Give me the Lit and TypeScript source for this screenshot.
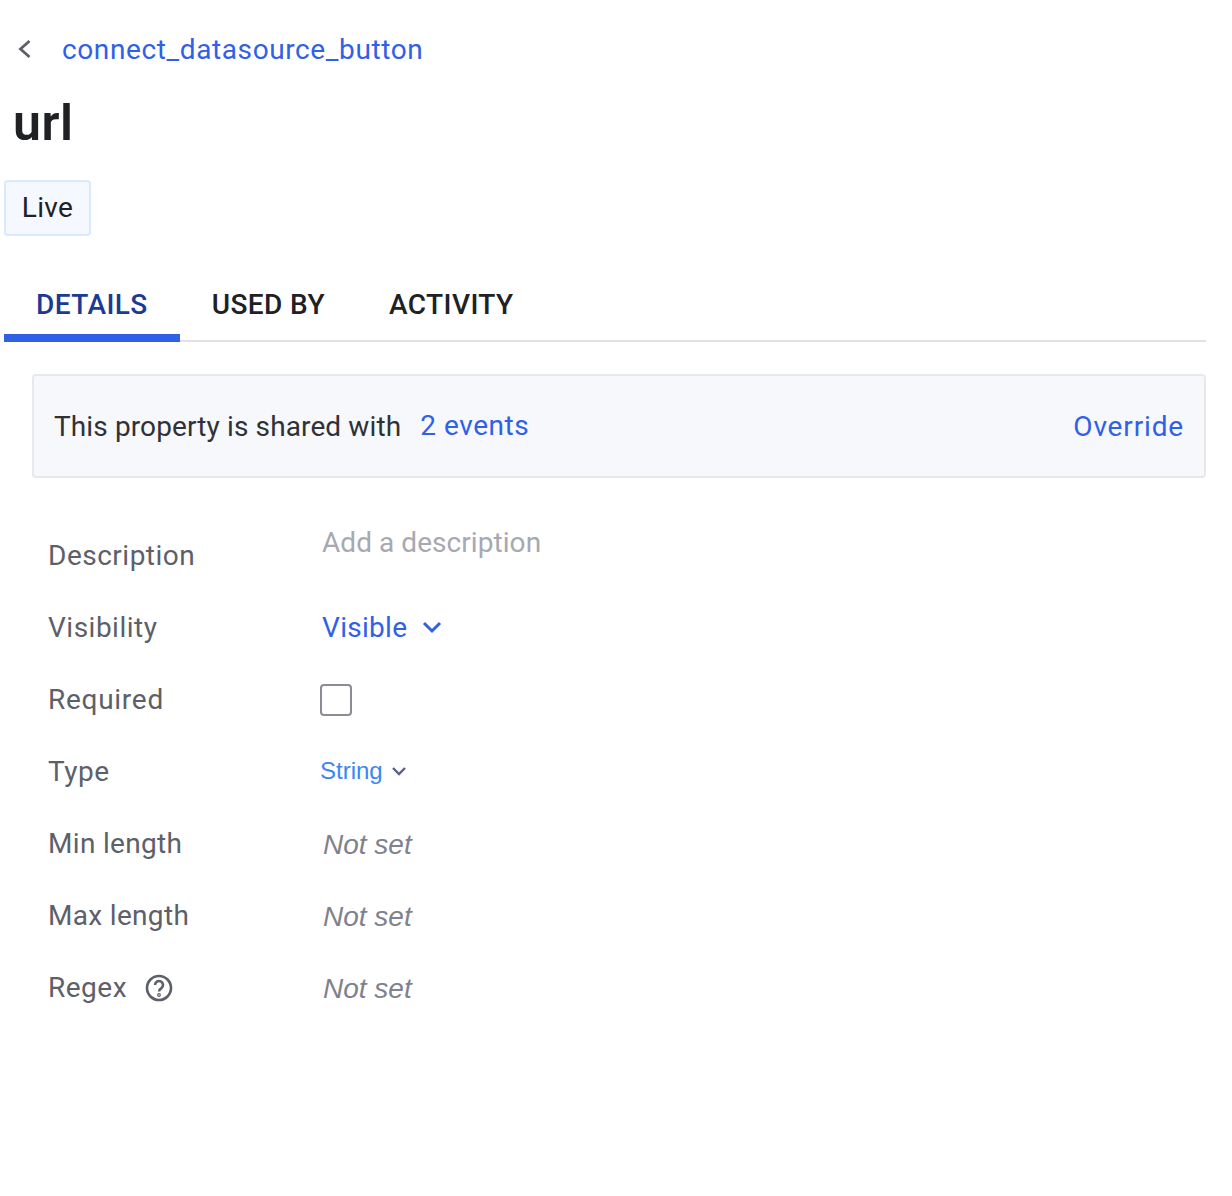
import { LitElement, html, css } from "lit";
import { customElement } from "lit/decorators.js";

const rows = ["Min length", "Max length"];

@customElement("app-root")
export class AppRoot extends LitElement {
  static styles = css`
    :host {
      display: block;
      width: 1232px;
      height: 1196px;
      box-sizing: border-box;
      padding: 0 26px 0 4px;
      background: #fff;
      font-family: Roboto, "Liberation Sans", sans-serif;
      color: #202125;
    }
    .crumb {
      height: 98px;
      display: flex;
      align-items: center;
      gap: 28px;
      padding-left: 12px;
      font-size: 28px;
      color: #3060e6;
      letter-spacing: 0.61px;
    }
    .crumb svg { width: 18px; height: 24px; display: block; }
    h1 {
      margin: 0;
      height: 50px;
      padding-left: 9px;
      font-size: 50px;
      line-height: 50px;
      font-weight: 600;
      letter-spacing: 0.6px;
      color: #202125;
    }
    .badge {
      margin-top: 32px;
      width: 87px;
      height: 56px;
      box-sizing: border-box;
      display: flex;
      align-items: center;
      justify-content: center;
      padding-bottom: 2px;
      border: 2px solid #dbe8fd;
      border-radius: 4px;
      background: #f5f8fe;
      font-size: 28px;
      letter-spacing: 0.3px;
    }
    .tabs {
      margin-top: 36px;
      height: 70px;
      box-sizing: border-box;
      display: flex;
      border-bottom: 2px solid #e1e1e6;
    }
    .tab {
      height: 70px;
      box-sizing: border-box;
      padding: 0 32px 6px;
      display: flex;
      align-items: center;
      font-size: 28px;
      font-weight: 500;
      letter-spacing: 0.42px;
      color: #202125;
    }
    .tab.active {
      color: #1c3a94;
      border-bottom: 8px solid #3060e6;
      padding-top: 2px;
      padding-bottom: 0;
    }
    .banner {
      margin: 32px 0 0 28px;
      height: 104px;
      box-sizing: border-box;
      display: flex;
      align-items: center;
      padding: 0 20px;
      border: 2px solid #e6e8ee;
      border-radius: 4px;
      background: #f7f8fc;
      font-size: 28px;
      color: #303136;
      letter-spacing: 0.12px;
    }
    .banner .link { color: #3060e6; margin-left: 19px; margin-top: -2px; letter-spacing: 0.55px; }
    .banner .override { color: #3060e6; margin-left: auto; letter-spacing: 0.85px; }
    .props {
      margin: 42px 0 0 44px;
      display: grid;
      grid-template-columns: 274px 1fr;
      grid-auto-rows: 72px;
      align-items: center;
      font-size: 28px;
      letter-spacing: 0.3px;
    }
    .label {
      color: #5d5f69;
      display: flex;
      align-items: center;
      gap: 18px;
      padding-bottom: 2px;
      letter-spacing: 0.5px;
    }
    .label.tight { letter-spacing: 0.32px; }
    .label.wide { letter-spacing: 0.72px; }
    .label svg { width: 28px; height: 28px; display: block; margin-top: 2px; }
    .placeholder { color: #a6a8b2; margin-top: -28px; letter-spacing: 0.06px; }
    .select {
      display: flex;
      align-items: center;
      gap: 14px;
      padding-bottom: 2px;
      color: #3060e6;
    }
    .select svg { width: 22px; height: 14px; display: block; }
    .checkbox {
      width: 32px;
      height: 32px;
      margin-left: -2px;
      box-sizing: border-box;
      border: 2px solid #8a8b96;
      border-radius: 4px;
    }
    .type {
      display: flex;
      align-items: center;
      gap: 8px;
      margin-left: -2px;
      padding-bottom: 2px;
      font-family: "Liberation Sans", Arial, sans-serif;
      font-size: 24px;
      letter-spacing: 0;
      color: #3b86f6;
    }
    .type svg { width: 16px; height: 10px; display: block; }
    .unset {
      font-family: "Liberation Sans", Arial, sans-serif;
      font-style: italic;
      color: #7f818c;
      letter-spacing: 0;
      margin-left: 1px;
      margin-top: 2px;
    }
  `;

  render() {
    const unset = html`<div class="unset">Not set</div>`;
    return html`
      <div class="crumb">
        <svg viewBox="0 0 18 24" fill="none" stroke="#5d5f69" stroke-width="2.8">
          <path d="M13.5 4l-9 8 9 8" />
        </svg>
        <span>connect_datasource_button</span>
      </div>
      <h1>url</h1>
      <div class="badge">Live</div>
      <div class="tabs">
        <div class="tab active">DETAILS</div>
        <div class="tab">USED BY</div>
        <div class="tab">ACTIVITY</div>
      </div>
      <div class="banner">
        <span>This property is shared with</span>
        <span class="link">2 events</span>
        <span class="override">Override</span>
      </div>
      <div class="props">
        <div class="label">Description</div>
        <div class="placeholder">Add a description</div>
        <div class="label">Visibility</div>
        <div class="select">
          <span>Visible</span>
          <svg viewBox="0 0 22 14" fill="none" stroke="#3060e6" stroke-width="3">
            <path d="M3 3l8 8 8-8" />
          </svg>
        </div>
        <div class="label wide">Required</div>
        <div class="checkbox"></div>
        <div class="label">Type</div>
        <div class="type">
          <span>String</span>
          <svg viewBox="0 0 16 10" fill="none" stroke="#5a5f8f" stroke-width="2.4">
            <path d="M2 2l6 6 6-6" />
          </svg>
        </div>
        ${rows.map((r) => html`<div class="label tight">${r}</div>${unset}`)}
        <div class="label">
          <span>Regex</span>
          <svg viewBox="0 0 28 28" fill="none" stroke="#5d5f69" stroke-width="2.6">
            <circle cx="14" cy="14" r="12" />
            <path d="M10 11a4 4 0 1 1 6.4 3.2c-1.5 1-2.4 1.6-2.4 3.3" />
            <circle cx="14" cy="21" r="0.6" />
          </svg>
        </div>
        ${unset}
      </div>
    `;
  }
}
